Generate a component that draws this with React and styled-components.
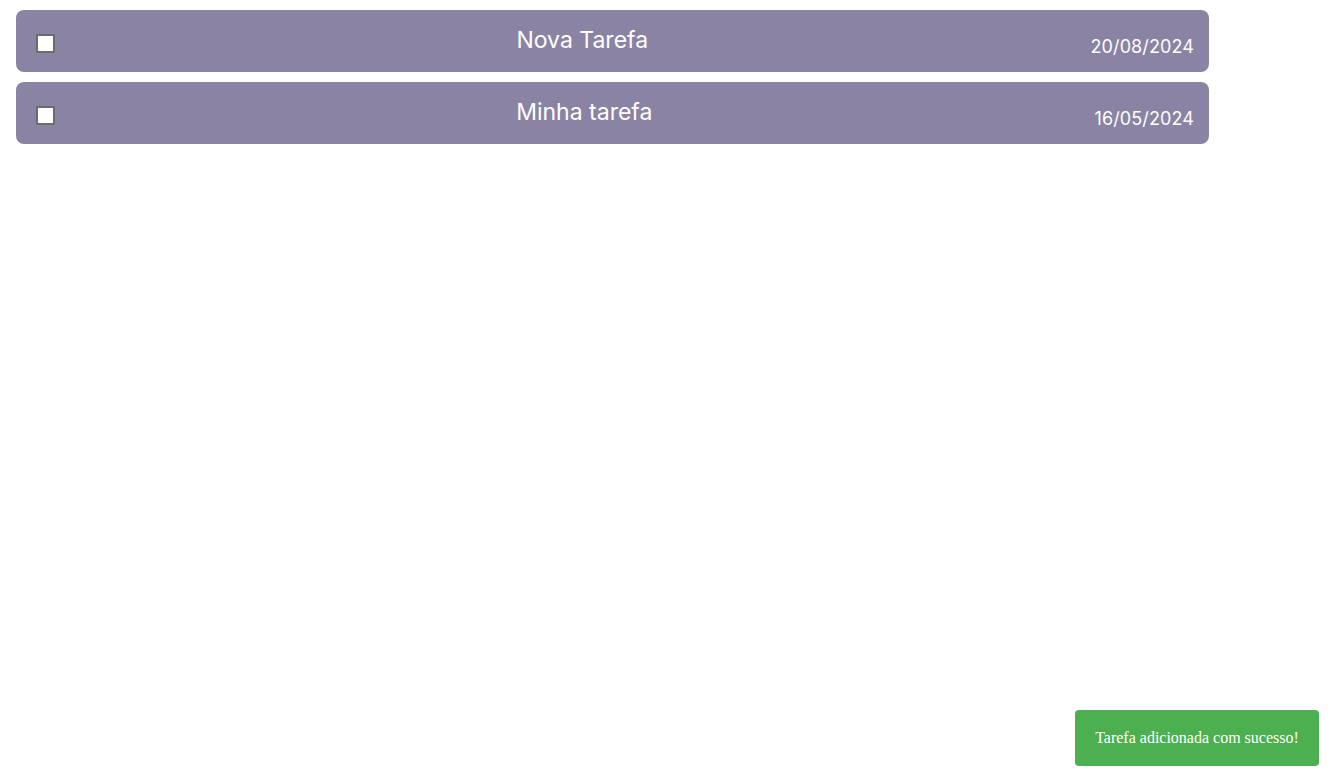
import React from 'react';
import styled, {createGlobalStyle} from 'styled-components';

const GlobalStyle = createGlobalStyle`
    html, body {
        margin: 0;
        padding: 0;
        background: #fff;
    }
    body {
        font-family: Inter, "Noto Sans", sans-serif;
    }
`;

const List = styled.div`
    display: flex;
    flex-direction: column;
    gap: 10px;
    padding: 10px 16px;
    width: 1193px;
`;

const Row = styled.div`
    display: flex;
    align-items: center;
    height: 62px;
    padding: 0 15px 0 20px;
    box-sizing: border-box;
    background-color: #8a83a4;
    border-radius: 8px;
    color: #fff;
`;

const Check = styled.input.attrs({type: 'checkbox'})`
    appearance: none;
    width: 19px;
    height: 19px;
    margin: 5px 19px 0 0;
    background: #fff;
    border: 2px solid #6b6b6b;
    border-radius: 1px;
    box-sizing: border-box;
`;

const Title = styled.div`
    flex: 1;
    text-align: center;
    font-size: 23px;
    font-weight: 400;
    margin-top: -3px;
`;

const Date = styled.div`
    font-size: 18px;
    margin-top: 11px;
    letter-spacing: 0.1px;
`;

const Toast = styled.div`
    position: fixed;
    right: 14px;
    bottom: 11px;
    width: 244px;
    height: 56px;
    display: flex;
    align-items: center;
    justify-content: center;
    background-color: #4caf50;
    border-radius: 4px;
    color: #fff;
    font-family: "Liberation Serif", serif;
    font-size: 16px;
`;

const tasks = [
    {title: 'Nova Tarefa', date: '20/08/2024'},
    {title: 'Minha tarefa', date: '16/05/2024'},
];

export default function App() {
    return (
        <>
            <GlobalStyle/>
            <List>
                {tasks.map((t) => (
                    <Row key={t.title}>
                        <Check/>
                        <Title>{t.title}</Title>
                        <Date>{t.date}</Date>
                    </Row>
                ))}
            </List>
            <Toast>Tarefa adicionada com sucesso!</Toast>
        </>
    );
}
